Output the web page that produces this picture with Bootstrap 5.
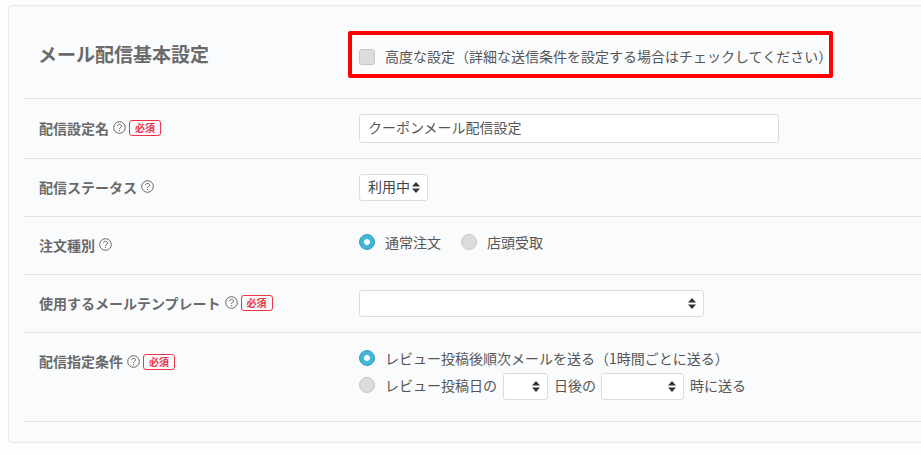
<!DOCTYPE html>
<html lang="ja">
<head>
<meta charset="utf-8">
<title>メール配信基本設定</title>
<link rel="stylesheet" href="https://cdn.jsdelivr.net/npm/bootstrap@5.3.0/dist/css/bootstrap.min.css">
<style>
html, body { height: 100%; overflow: hidden; }
body { background: #fdfdfd; font-family: "Noto Sans CJK JP", "Noto Sans", sans-serif; font-size: 14px; color: #555; line-height: 20px; padding: 5px 0 0 8px; }
.panel-box { background: #fafbfd; border: 1px solid #e6e8eb; border-radius: 3px; width: 940px; padding: 0 0 20px 15px; }
.set-row { border-bottom: 1px solid #e1e3e6; }
.row-head { height: 93px; }
.row-name { height: 60px; }
.row-std { height: 58px; }
.row-cond { height: 89px; align-items: flex-start !important; padding-top: 19px; }
.label-cell { width: 335px; flex: none; padding-left: 15px; padding-bottom: 2px; font-weight: 700; color: #6a6a6a; gap: 3px; }
.row-cond .label-cell { padding-bottom: 0; margin-top: -1px; }
.head-title { font-size: 19px; font-weight: 700; color: #6a6a6a; line-height: 26px; margin: 6px 0 0 -1px; }
.help-mark { width: 13px; height: 13px; flex: none; margin-left: 1px; }
.must-tag { border: 1px solid #ee3344; border-radius: 3px; color: #ee3344; font-size: 10px; line-height: 14px; width: 32px; text-align: center; font-weight: 700; margin-top: 1px; }
.red-frame { border: 4px solid #f00; border-radius: 2px; margin: 4px 0 0 -11px; height: 47px; padding: 0 5px 0 7px; gap: 10px; width: 485px; white-space: nowrap; }
.red-frame .opt-label { margin-top: 3px; }
.form-check-input.tick-box, .form-check-input.dot-box { width: 16px; height: 16px; margin: 0; flex: none; background-color: #dcdcdc; border: 1px solid #c6c6c6; box-shadow: none; }
.form-check-input.tick-box { border-radius: 3px; margin-top: 5px; }
.form-check-input.dot-box:checked { background-color: #41b6d8; border-color: #3a9fbb; background-image: radial-gradient(circle, #fff 0 2.6px, transparent 3.2px); }
.opt-label { margin: 0; }
.form-control.name-field { width: 420px; height: 29px; padding: 0 8px 3px; font-size: 14px; color: #555; border-color: #dcdcdc; border-radius: 3px; font-family: inherit; }
.form-select.pick { height: 27px; padding: 0 0 2px 8px; font-size: 14px; color: #444; border: 1px solid #dcdcdc; border-radius: 3px; font-family: inherit; background-size: 8px 11px; background-position: right 7px center; background-image: url("data:image/svg+xml,%3Csvg xmlns='http://www.w3.org/2000/svg' viewBox='0 0 8 11'%3E%3Cpath fill='%23333' d='M4 0l4 4.4H0zM4 11L0 6.6h8z'/%3E%3C/svg%3E"); }
.pick-status { width: 69px; }
.pick-wide { width: 345px; }
.pick-day { width: 45px; margin: 4px 0 0 -1px; }
.pick-hour { width: 83px; margin: 4px 0 0 -2px; }
.radio-line { height: 27px; gap: 10px; white-space: nowrap; }
.radio-stack { margin-top: -8px; }
.pair-gap { gap: 20px; margin-top: -8px; }
.pair-item { gap: 10px; }
.pick-inline { gap: 6.5px; }
</style>
</head>
<body>
<svg width="0" height="0" class="position-absolute"><defs>
<symbol id="help" viewBox="0 0 13 13"><circle cx="6.5" cy="6.5" r="5.8" fill="none" stroke="#666" stroke-width="1"/><path d="M4.5 5.2c0-1.2.9-1.9 2-1.9s2 .7 2 1.7c0 1.5-2 1.5-2 3" fill="none" stroke="#666" stroke-width="1"/><circle cx="6.5" cy="9.6" r=".7" fill="#666"/></symbol>
</defs></svg>
<form class="panel-box">
  <div class="set-row row-head d-flex align-items-center">
    <div class="label-cell"><h1 class="head-title">メール配信基本設定</h1></div>
    <div class="red-frame d-flex align-items-center">
      <input class="form-check-input tick-box" type="checkbox" id="adv">
      <label class="opt-label" for="adv">高度な設定（詳細な送信条件を設定する場合はチェックしてください）</label>
    </div>
  </div>
  <div class="set-row row-name d-flex align-items-center">
    <div class="label-cell d-flex align-items-center">配信設定名 <svg class="help-mark"><use href="#help"/></svg><span class="must-tag">必須</span></div>
    <input class="form-control name-field" type="text" value="クーポンメール配信設定">
  </div>
  <div class="set-row row-std d-flex align-items-center">
    <div class="label-cell d-flex align-items-center">配信ステータス <svg class="help-mark"><use href="#help"/></svg></div>
    <select class="form-select pick pick-status"><option>利用中</option></select>
  </div>
  <div class="set-row row-std d-flex align-items-center">
    <div class="label-cell d-flex align-items-center">注文種別 <svg class="help-mark"><use href="#help"/></svg></div>
    <div class="d-flex align-items-center pair-gap">
      <div class="d-flex align-items-center pair-item"><input class="form-check-input dot-box" type="radio" name="order" id="o1" checked><label class="opt-label" for="o1">通常注文</label></div>
      <div class="d-flex align-items-center pair-item"><input class="form-check-input dot-box" type="radio" name="order" id="o2"><label class="opt-label" for="o2">店頭受取</label></div>
    </div>
  </div>
  <div class="set-row row-std d-flex align-items-center">
    <div class="label-cell d-flex align-items-center">使用するメールテンプレート <svg class="help-mark"><use href="#help"/></svg><span class="must-tag">必須</span></div>
    <select class="form-select pick pick-wide"><option></option></select>
  </div>
  <div class="set-row row-cond d-flex align-items-center">
    <div class="label-cell d-flex align-items-center">配信指定条件 <svg class="help-mark"><use href="#help"/></svg><span class="must-tag">必須</span></div>
    <div class="radio-stack">
      <div class="radio-line d-flex align-items-center"><input class="form-check-input dot-box" type="radio" name="cond" id="c1" checked><label class="opt-label" for="c1">レビュー投稿後順次メールを送る（1時間ごとに送る）</label></div>
      <div class="radio-line d-flex align-items-center"><input class="form-check-input dot-box" type="radio" name="cond" id="c2">
        <div class="d-flex align-items-center pick-inline"><label class="opt-label" for="c2">レビュー投稿日の</label><select class="form-select pick pick-day"><option></option></select><span>日後の</span><select class="form-select pick pick-hour"><option></option></select><span>時に送る</span></div>
      </div>
    </div>
  </div>
</form>
<script src="https://cdn.jsdelivr.net/npm/bootstrap@5.3.0/dist/js/bootstrap.bundle.min.js"></script>
</body>
</html>
